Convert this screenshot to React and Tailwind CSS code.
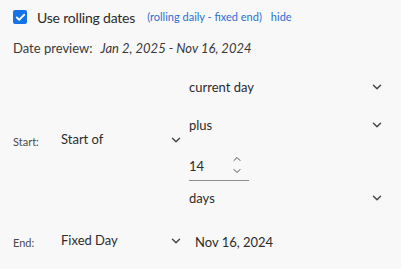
import React, { useState } from 'react';
import { ChevronDown, ChevronUp, Check } from 'lucide-react';

const font = { fontFamily: 'Lato, "Open Sans", sans-serif' };

const Chevron = ({ className = '' }) => (
  <ChevronDown className={`w-[14px] h-[14px] text-[#4b4b4b] ${className}`} strokeWidth={2.6} />
);

const App = () => {
  const [rolling, setRolling] = useState(true);

  return (
    <div className="w-[401px] h-[269px] bg-[#f8f8f8] text-[#2c2c2c] overflow-hidden" style={font}>
      {/* Top: checkbox row */}
      <div className="flex items-center h-[18px] mt-[8px] pl-[13px]">
        <button
          onClick={() => setRolling(!rolling)}
          className="w-[14px] h-[14px] rounded-[2px] bg-[#1473e6] flex items-center justify-center"
        >
          {rolling && <Check className="w-[11px] h-[11px] text-white" strokeWidth={4} />}
        </button>
        <span className="ml-[10px] text-[14px] text-[#2c2c2c] tracking-[-0.2px]">Use rolling dates</span>
        <span className="ml-[12px] text-[11px] text-[#2b70d4]">(rolling daily - fixed end)</span>
        <span className="ml-[9px] text-[11px] text-[#2b70d4]">hide</span>
      </div>

      {/* Date preview */}
      <div className="flex items-center h-[18px] mt-[14px] pl-[13px] text-[13px] text-[#3a3a3a]">
        <span>Date preview:</span>
        <span className="ml-[8px] italic">Jan 2, 2025 - Nov 16, 2024</span>
      </div>

      {/* Start row */}
      <div className="flex items-center mt-[11px]">
        <span className="w-[61px] pl-[13px] text-[11px] text-[#4b4b4b] -mt-[1px]">Start:</span>
        <div className="w-[122px] flex items-center justify-between text-[13px] -mt-[6px]">
          <span>Start of</span>
          <Chevron />
        </div>
        <div className="ml-[6px] w-[195px] flex flex-col">
          <div className="h-[38px] flex items-center justify-between text-[13px]">
            <span>current day</span>
            <Chevron className="-mt-[2px]" />
          </div>
          <div className="h-[38px] flex items-center justify-between text-[13px]">
            <span>plus</span>
            <Chevron className="-mt-[2px]" />
          </div>
          <div className="w-[60px] h-[36px] flex items-center justify-between border-b border-[#8e8e8e] text-[13px]">
            <span className="pt-[8px]">14</span>
            <div className="flex flex-col items-center mr-[6px] pt-[4px]">
              <ChevronUp className="w-[12px] h-[12px] text-[#4b4b4b]" strokeWidth={2} />
              <ChevronDown className="w-[12px] h-[12px] text-[#4b4b4b]" strokeWidth={2} />
            </div>
          </div>
          <div className="h-[36px] flex items-center justify-between text-[13px]">
            <span>days</span>
            <Chevron className="-mt-[2px]" />
          </div>
        </div>
      </div>

      {/* End row */}
      <div className="flex items-center mt-[12px]">
        <span className="w-[61px] pl-[13px] text-[11px] text-[#4b4b4b] pt-[4px]">End:</span>
        <div className="w-[122px] flex items-center justify-between text-[13px]">
          <span>Fixed Day</span>
          <Chevron />
        </div>
        <span className="ml-[12px] text-[13px] pt-[4px]">Nov 16, 2024</span>
      </div>
    </div>
  );
};

export default App;
